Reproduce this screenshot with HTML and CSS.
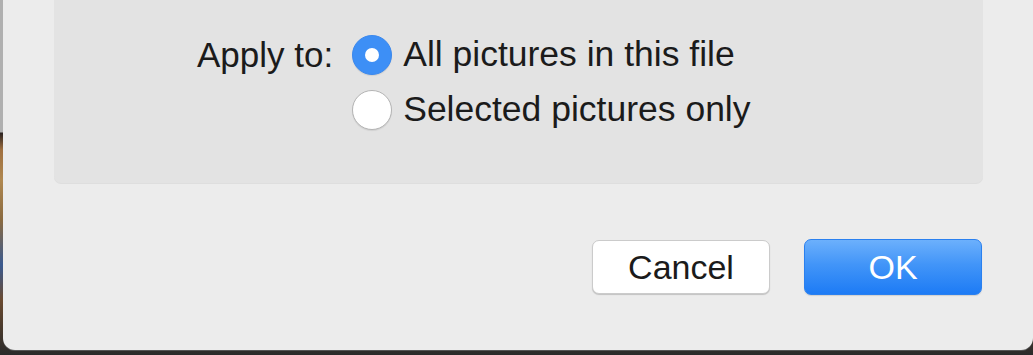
FILE: index.html
```html
<!DOCTYPE html>
<html>
<head>
<meta charset="utf-8">
<link rel="stylesheet" href="styles.css">
</head>
<body>
<div class="dialog">
  <div class="panel">
    <div class="options">
      <div class="label">Apply to:</div>
      <div class="choices">
        <div class="choice"><span class="radio on"></span><span class="text">All pictures in this file</span></div>
        <div class="choice"><span class="radio"></span><span class="text">Selected pictures only</span></div>
      </div>
    </div>
  </div>
  <div class="actions">
    <button class="btn cancel">Cancel</button>
    <button class="btn ok">OK</button>
  </div>
</div>
</body>
</html>
```

FILE: styles.css
```css
html, body {
  margin: 0;
  padding: 0;
}
body {
  width: 1033px;
  height: 355px;
  overflow: hidden;
  background:
    linear-gradient(to bottom, #b0b0b0 0px, #b0b0b0 132px, #2a2220 133px, #a07040 150px, #b08850 180px, #8a6a40 220px, #3a5a90 265px, #6a4a30 300px, #2a2a2a 355px);
  font-family: "Liberation Sans", Arial, Helvetica, sans-serif;
  color: #1b1b1b;
}
.dialog {
  margin-left: 3px;
  width: 1030px;
  height: 350px;
  background: #ececec;
  border-radius: 0 0 12px 12px;
  box-shadow: 0 1px 0 #555;
  box-sizing: border-box;
  padding-left: 51px;
  padding-right: 51px;
  display: flex;
  flex-direction: column;
}
.panel {
  width: 929px;
  height: 183px;
  background: #e3e3e3;
  border-radius: 0 0 7px 7px;
  box-shadow: 0 1px 0 #dedede;
  box-sizing: border-box;
  padding-top: 27px;
  padding-left: 143px;
}
.options {
  display: flex;
  align-items: flex-start;
  gap: 19px;
}
.label {
  height: 55px;
  line-height: 55px;
  font-size: 35px;
}
.choices {
  display: flex;
  flex-direction: column;
}
.choice {
  height: 55px;
  display: flex;
  align-items: center;
  gap: 11px;
}
.text {
  font-size: 35.5px;
  line-height: 55px;
}
.radio {
  width: 40px;
  height: 40px;
  border-radius: 50%;
  box-sizing: border-box;
  background: #ffffff;
  border: 1px solid #b4b4b4;
  box-shadow: 0 1px 1px rgba(0,0,0,0.08);
  display: flex;
  align-items: center;
  justify-content: center;
  flex: none;
}
.radio.on {
  background: #3d8ff6;
  border-color: #3a88ee;
}
.radio.on::after {
  content: "";
  width: 14px;
  height: 14px;
  border-radius: 50%;
  background: #ffffff;
}
.actions {
  margin-top: 57px;
  display: flex;
  justify-content: flex-end;
  gap: 34px;
}
.btn {
  width: 178px;
  height: 54px;
  border-radius: 7px;
  font-family: "Liberation Sans", Arial, Helvetica, sans-serif;
  font-size: 34px;
  padding: 0;
  margin: 0;
  box-sizing: border-box;
}
.cancel {
  background: #ffffff;
  color: #1b1b1b;
  border: 1px solid #cbcbcb;
  box-shadow: 0 1px 1px rgba(0,0,0,0.18);
}
.ok {
  margin-top: -1px;
  height: 56px;
  background: linear-gradient(to bottom, #6cb0fc 0%, #4295f8 45%, #1d7bf5 100%);
  color: #ffffff;
  border: 1px solid #2a80ef;
  box-shadow: 0 1px 1px rgba(0,0,0,0.12);
}
```
